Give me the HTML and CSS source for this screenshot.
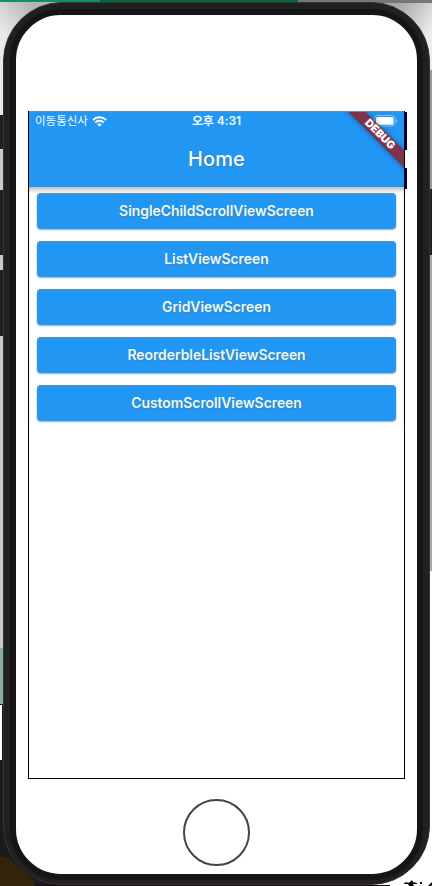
FILE: index.html
```html
<!DOCTYPE html>
<html lang="ko">
<head>
<meta charset="utf-8">
<title>Home</title>
<link rel="stylesheet" href="styles.css">
</head>
<body>
<svg class="desktop" width="432" height="886" viewBox="0 0 432 886" aria-hidden="true">
  <defs>
    <linearGradient id="shade" gradientUnits="userSpaceOnUse" x1="0" y1="30" x2="32" y2="6"><stop offset="0" stop-color="#e9e9e9"/><stop offset="1" stop-color="#b5b5b5"/></linearGradient>
    <linearGradient id="shade-r" gradientUnits="userSpaceOnUse" x1="432" y1="30" x2="395" y2="6"><stop offset="0" stop-color="#ececec"/><stop offset="1" stop-color="#a5a5a5"/></linearGradient>
  </defs>
  <path fill="#fff" d="M0 0H432V886H0z"/>
  <path fill="url(#shade)" d="M0 0H60V115H0z"/>
  <path fill="#c9c9c9" d="M0 115H4V648H0z"/>
  <path fill="url(#shade-r)" d="M372 0H432V115H372z"/>
  <path fill="#9d9b99" d="M429 70H432V571H429z"/>
  <path fill="#a9a6a3" d="M430 255H432V571H430z"/>
  <path fill="#777" d="M60 0H432V3H60z"/>
  <path fill="#07975a" d="M0 0H110V2H0z"/>
  <path fill="#006b36" d="M100 0H298V2H100z"/>
  <path fill="#8aaba5" d="M0 648H4V704H0z"/>
  <path fill="#111" d="M0 704H3V705H0zM2 704H3V886H2z"/>
  <path fill="#191b1d" d="M0 760H4L8 845L70 886H0z"/>
  <path fill="#34230d" d="M0 856L8 858L34 880V886H0z"/>
  <path fill="#202020" d="M0 115H6V149H0zM0 190H6V255H0zM0 270H6V336H0zM428 189H432V255H428z"/>
  <path fill="#160a10" d="M36 885H390V886H36z"/>
  <path fill="#08080d" d="M404 883l3-1 1 1 2-1 2-2 1 2 4 1v1h-4l1 2h-5l-1-2h-4zM420 882h2v2h-2zM428 886l4-4v3l-1 1z"/>
</svg>
<main class="phone">
  <div class="face">
    <section class="screen">
      <header class="appbar">
        <div class="status">
          <span class="carrier">이동통신사
            <svg width="15" height="11" viewBox="0 0 15 11"><g fill="none" stroke="#fff" stroke-width="2"><path d="M.9 4.1a9.3 9.3 0 0 1 13.2 0"/><path d="M3.3 6.6a5.9 5.9 0 0 1 8.4 0"/></g><path fill="#fff" d="M5.2 8.4a3.2 3.2 0 0 1 4.6 0L7.5 10.8z"/></svg>
          </span>
          <span class="time">오후 4:31</span>
          <svg class="battery" width="24" height="12" viewBox="0 0 24 12"><rect x=".5" y=".5" width="20.5" height="10.5" rx="3" fill="none" stroke="#8bbbe0"/><rect x="2" y="2" width="17.5" height="7.8" rx="1.6" fill="#fff"/><path d="M22 4v4q1.4-.7 1.4-2T22 4" fill="#8bbbe0"/></svg>
        </div>
        <h1>Home</h1>
        <div class="debug"><span>DEBUG</span></div>
      </header>
      <nav class="menu">
        <button>SingleChildScrollViewScreen</button>
        <button>ListViewScreen</button>
        <button>GridViewScreen</button>
        <button>ReorderbleListViewScreen</button>
        <button>CustomScrollViewScreen</button>
      </nav>
      <i class="edge edge-top"></i>
      <i class="edge edge-low"></i>
    </section>
    <div class="home-button"></div>
  </div>
</main>
</body>
</html>
```
FILE: styles.css
```css
* { box-sizing: border-box; }
body { margin: 0; width: 432px; height: 886px; overflow: hidden; position: relative; font-family: Inter, "Noto Sans CJK KR", sans-serif; }
.desktop { position: absolute; inset: 0; }
.phone {
  position: relative;
  width: 427px; height: 883px;
  margin: 2px 0 0 3px;
  padding: 6px 6px 5px;
  border: 1px solid #343434;
  border-radius: 59px;
  background: #202020;
}
.face {
  height: 871px;
  width: 413px;
  border: 6px solid #151515;
  border-radius: 51px;
  background: #fff;
  display: flex; flex-direction: column; align-items: center;
  padding-top: 96px;
}
.screen {
  position: relative;
  width: 377px; height: 668px; flex: none;
  border: 1px solid #000; border-top: 0;
  background: #fff;
}
.edge { position: absolute; left: 375px; width: 3px; background: #000033; }
.edge-top { top: 1px; height: 38px; }
.edge-low { top: 57px; height: 21px; }
.appbar {
  position: relative;
  height: 76px;
  overflow: hidden;
  background: #2196f3;
  border-top: 1px solid #718da5;
  color: #f2fbff;
}
.status {
  display: grid; grid-template-columns: 1fr auto 1fr; align-items: center;
  height: 18px; padding: 0 6px 0 6px;
}
.carrier { display: flex; align-items: center; gap: 4px; font-size: 11.5px; line-height: 18px; }
.time { font-weight: 600; font-size: 11.9px; line-height: 18px; }
.battery { justify-self: end; }
h1 {
  margin: 14px 0 0;
  font-size: 20px; line-height: 30px; font-weight: 550; letter-spacing: .1px;
  text-align: center;
  text-shadow: 1px 1px 1px #4b7fae;
}
.debug {
  position: absolute; top: 16px; right: -30px;
  width: 110px; height: 12px;
  transform: rotate(45deg);
  background: #80314b;
  box-shadow: 0 0 5px #0006;
  color: #fff;
  font-size: 10.8px; line-height: 12px; font-weight: 900;
  text-align: center;
}
.debug span { position: relative; left: 1px; }
.menu {
  display: flex; flex-direction: column; gap: 12px;
  padding: 6px 8px;
  box-shadow: inset 0 5px 4px -2px #0004;
}
.menu button {
  height: 36px; padding: 0 0 2px;
  border: 0; border-top: 1px solid #668aaa; border-radius: 4px;
  background: #2196f3; color: #e6fbff;
  box-shadow: 0 1px 2px #1a6cac88;
  font: 600 14px/33px Inter, sans-serif;
  letter-spacing: -.07px;
  text-shadow: 1px 1px 1px #4b7fae;
}
.home-button {
  width: 67px; height: 67px; margin: 20px 1px 0 0; flex: none;
  border: 2px solid #444; border-radius: 50%;
}
```
